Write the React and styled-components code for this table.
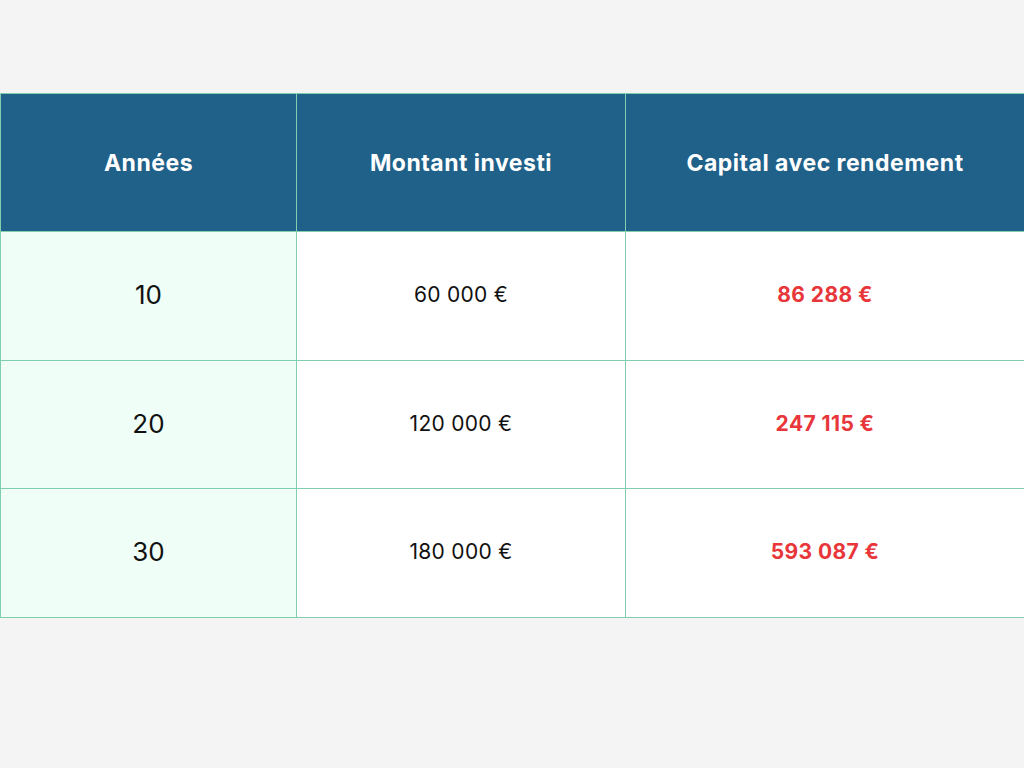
import React from "react";
import styled, { createGlobalStyle } from "styled-components";

const Global = createGlobalStyle`
  html, body { margin: 0; padding: 0; background: #f4f4f4; }
  body { font-family: Inter, "Noto Sans", sans-serif; }
`;

const Page = styled.div`
  padding-top: 93px;
  width: 1024px;
`;

const Table = styled.table`
  width: 1024px;
  border-collapse: collapse;
  table-layout: fixed;
  border: 1px solid #7fcfae;
`;

const HeadCell = styled.th`
  background: #1f6189;
  color: #ffffff;
  font-weight: 700;
  font-size: 23px;
  letter-spacing: 0.5px;
  height: 137px;
  padding: 0;
  text-align: center;
  border: 1px solid #7fcfae;
`;

const Cell = styled.td`
  height: 125.6px;
  padding: 0 0 2px;
  text-align: center;
  border: 1px solid #7fcfae;
  background: ${(p) => (p.$tint ? "#effef6" : "#ffffff")};
  color: ${(p) => (p.$red ? "#e8363a" : "#111111")};
  font-size: ${(p) => p.$size}px;
  font-weight: ${(p) => (p.$bold ? 700 : 400)};
  letter-spacing: ${(p) => p.$spacing || 0}px;
`;

const rows = [
  ["10", "60 000 €", "86 288 €"],
  ["20", "120 000 €", "247 115 €"],
  ["30", "180 000 €", "593 087 €"],
];

export default function App() {
  return (
    <>
      <Global />
      <Page>
        <Table>
          <colgroup>
            <col style={{ width: 296 }} />
            <col style={{ width: 329 }} />
            <col style={{ width: 399 }} />
          </colgroup>
          <thead>
            <tr>
              <HeadCell>Années</HeadCell>
              <HeadCell>Montant investi</HeadCell>
              <HeadCell>Capital avec rendement</HeadCell>
            </tr>
          </thead>
          <tbody>
            {rows.map((r) => (
              <tr key={r[0]}>
                <Cell $tint $size={26}>{r[0]}</Cell>
                <Cell $size={21} $spacing={0.3}>{r[1]}</Cell>
                <Cell $size={21} $spacing={0.4} $red $bold>{r[2]}</Cell>
              </tr>
            ))}
          </tbody>
        </Table>
      </Page>
    </>
  );
}
